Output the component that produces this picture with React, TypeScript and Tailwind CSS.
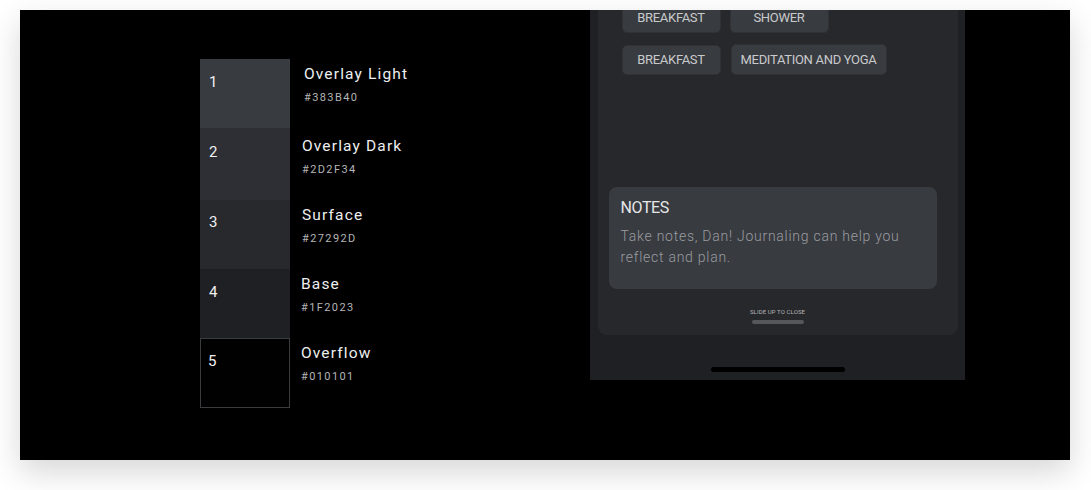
const swatches = [
  { n: "1", name: "Overlay Light", hex: "#383B40", bg: "bg-[#383b40] pl-[9px]", row: "h-[69px]", text: "ml-[14px] pt-[5px]", num: "pt-[13px]", gap: "mt-[6px]" },
  { n: "2", name: "Overlay Dark", hex: "#2D2F34", bg: "bg-[#2d2f34] pl-[9px]", row: "h-[72px]", text: "ml-[12px] pt-[8px]", num: "pt-[14px]", gap: "mt-[6px]" },
  { n: "3", name: "Surface", hex: "#27292D", bg: "bg-[#27292d] pl-[9px]", row: "h-[69px]", text: "ml-[12px] pt-[5px]", num: "pt-[12px]", gap: "mt-[6px]" },
  { n: "4", name: "Base", hex: "#1F2023", bg: "bg-[#1f2023] pl-[9px]", row: "h-[69px]", text: "ml-[11px] pt-[5px]", num: "pt-[13px]", gap: "mt-[6px]" },
  { n: "5", name: "Overflow", hex: "#010101", bg: "bg-[#010101] border border-[#3a3c40] pl-[7px]", row: "h-[70px]", text: "ml-[11px] pt-[5px]", num: "pt-[12px]", gap: "mt-[6px]" },
];

function Tag({ label, className }: { label: string; className: string }) {
  return (
    <div
      className={`flex items-center justify-center rounded-[5px] border border-[#2f3135] bg-[#383b40] text-[13px] tracking-[-0.3px] text-[#c9cacc] ${className}`}
    >
      {label}
    </div>
  );
}

export default function App() {
  return (
    <div className="h-[490px] w-full bg-white px-[20px] pt-[10px] font-['Roboto',sans-serif]">
      <div className="flex h-[450px] w-[1050px] overflow-hidden bg-black shadow-[0_12px_30px_rgba(0,0,0,0.16)]">
        {/* Colour swatches */}
        <div className="ml-[180px] mt-[49px] w-[390px]">
          {swatches.map((s) => (
            <div key={s.n} className={`flex ${s.row}`}>
              <div className={`w-[90px] text-[15px] leading-[20px] text-[#f0f0f1] ${s.bg} ${s.num}`}>
                {s.n}
              </div>
              <div className={s.text}>
                <div className="text-[15.5px] leading-[20px] tracking-[1.15px] text-[#eeeff0]">{s.name}</div>
                <div className={`text-[11px] leading-[16px] tracking-[1.4px] text-[#b4b5b7] ${s.gap}`}>{s.hex}</div>
              </div>
            </div>
          ))}
        </div>

        {/* Phone */}
        <div className="flex h-[370px] w-[375px] flex-col items-center bg-[#1f2023]">
          <div className="flex h-[325px] w-[360px] flex-col rounded-b-[9px] bg-[#26282c]">
            <div className="flex h-[177px] flex-col pl-[24px]">
              <div className="-mt-[7px] flex gap-[9px]">
                <Tag label="BREAKFAST" className="h-[30px] w-[99px]" />
                <Tag label="SHOWER" className="h-[30px] w-[99px]" />
              </div>
              <div className="mt-[11px] flex gap-[10px]">
                <Tag label="BREAKFAST" className="mt-[1px] h-[30px] w-[99px]" />
                <Tag label="MEDITATION AND YOGA" className="h-[31px] w-[156px]" />
              </div>
            </div>

            <div className="ml-[11px] h-[102px] w-[328px] rounded-[8px] bg-[#383b40] px-[12px] pt-[10px]">
              <div className="text-[16px] leading-[22px] tracking-[-0.4px] text-[#e6e7e8]">NOTES</div>
              <div className="mt-[7px] text-[14px] font-light leading-[21px] tracking-[0.74px] text-[#9a9ca0]">
                Take notes, Dan! Journaling can help you reflect and plan.
              </div>
            </div>

            <div className="mt-[19px] flex flex-col items-center">
              <div className="text-[6px] leading-[8px] tracking-[0.1px] text-[#b5b6b8]">SLIDE UP TO CLOSE</div>
              <div className="mt-[4px] h-[4px] w-[52px] rounded-full bg-[#55575b]" />
            </div>
          </div>
          <div className="mt-[32px] h-[5px] w-[134px] rounded-full bg-black" />
        </div>
      </div>
    </div>
  );
}
